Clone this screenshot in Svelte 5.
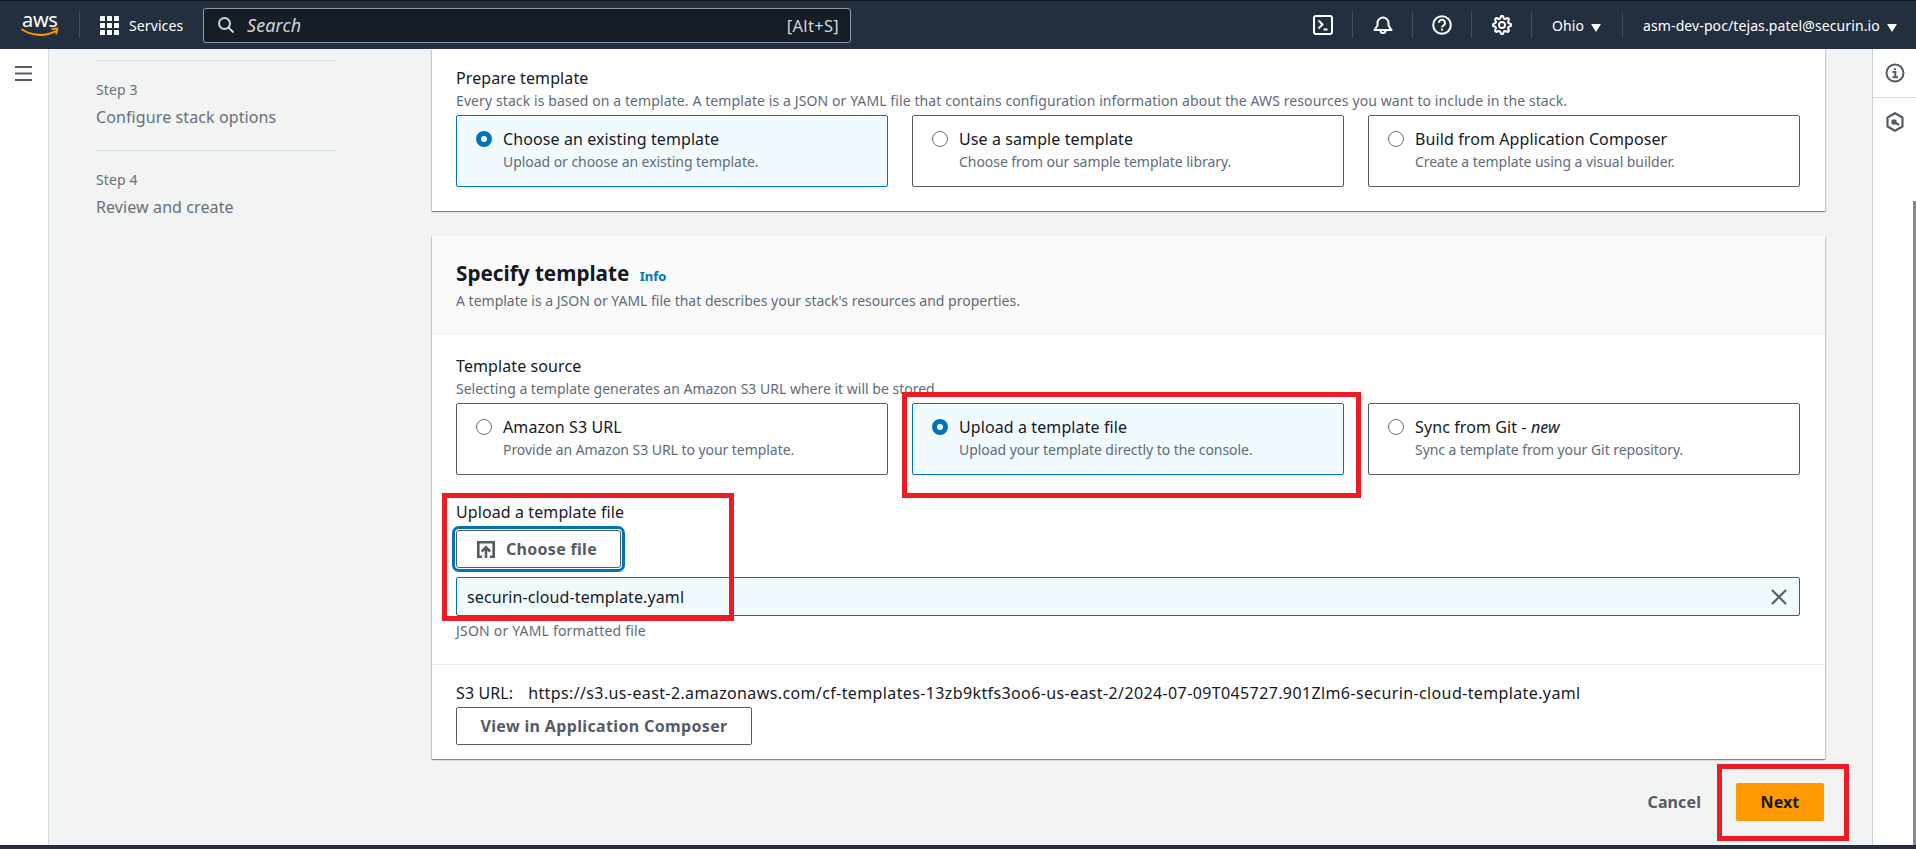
<script>
  const steps = [
    { label: 'Step 3', title: 'Configure stack options' },
    { label: 'Step 4', title: 'Review and create' }
  ];

  const prepareTiles = [
    { title: 'Choose an existing template', desc: 'Upload or choose an existing template.', on: true },
    { title: 'Use a sample template', desc: 'Choose from our sample template library.' },
    { title: 'Build from Application Composer', desc: 'Create a template using a visual builder.' }
  ];

  const sourceTiles = [
    { title: 'Amazon S3 URL', desc: 'Provide an Amazon S3 URL to your template.' },
    { title: 'Upload a template file', desc: 'Upload your template directly to the console.', on: true },
    { title: 'Sync from Git - ', tag: 'new', desc: 'Sync a template from your Git repository.' }
  ];

  // cog outline for the settings icon
  function cogPath(teeth, outer, inner) {
    let d = '';
    const n = teeth * 4;
    for (let i = 0; i < n; i++) {
      const r = i % 4 < 2 ? outer : inner;
      const a = ((i - 0.5) / n) * Math.PI * 2;
      d += (i ? 'L' : 'M') + (10 + r * Math.cos(a)).toFixed(2) + ' ' + (10 + r * Math.sin(a)).toFixed(2);
    }
    return d + 'Z';
  }
</script>

{#snippet tile(t)}
  <div class="tile" class:on={t.on}>
    <span class="radio"></span>
    <div>
      <div class="tile-title">{t.title}{#if t.tag}<em>{t.tag}</em>{/if}</div>
      <div class="desc">{t.desc}</div>
    </div>
  </div>
{/snippet}

<div class="page">
  <header class="topbar">
    <div class="logo">
      <span class="logo-text">aws</span>
      <svg width="38" height="11" viewBox="0 0 38 11">
        <path d="M1 2.500c9 6 23 7.500 33 1.800" fill="none" stroke="#f90" stroke-width="2" stroke-linecap="round" />
        <path d="M30.500 2.200l6-.700-1.500 5.800" fill="none" stroke="#f90" stroke-width="1.800" stroke-linejoin="round" />
      </svg>
    </div>
    <span class="sep logo-sep"></span>
    <svg class="grid-icon" width="19" height="19" viewBox="0 0 19 19" fill="#fff">
      {#each [0, 7, 14] as y}
        {#each [0, 7, 14] as x}
          <rect x={x} y={y} width="5" height="5" rx=".6" />
        {/each}
      {/each}
    </svg>
    <span class="services">Services</span>
    <div class="search">
      <svg width="18" height="18" viewBox="0 0 18 18" fill="none" stroke="#d1d5db" stroke-width="2">
        <circle cx="7.500" cy="7.500" r="5.500" />
        <path d="M11.500 11.500l5 5" />
      </svg>
      <span class="search-text">Search</span>
      <span class="shortcut">[Alt+S]</span>
    </div>

    <div class="tools">
      <svg class="tool" width="20" height="20" viewBox="0 0 20 20" fill="none" stroke="#fff" stroke-width="2">
        <rect x="1" y="1" width="18" height="18" rx="2" />
        <path d="M5.500 5.500l4 4-4 4M10.500 14.500h4" />
      </svg>
      <span class="sep"></span>
      <svg class="tool" width="20" height="20" viewBox="0 0 20 20" fill="none" stroke="#fff" stroke-width="2" stroke-linejoin="round">
        <path d="M1.500 15h17l-3-4.500V8a5.500 5.500 0 0 0-11 0v2.500z" />
        <path d="M7.500 15.500a2.500 2.500 0 0 0 5 0" />
      </svg>
      <span class="sep"></span>
      <svg class="tool" width="20" height="20" viewBox="0 0 20 20" fill="none" stroke="#fff" stroke-width="2">
        <circle cx="10" cy="10" r="8.800" />
        <path d="M7 7.800a3 3 0 1 1 4.600 2.500c-1 .6-1.600 1.100-1.600 2.200" />
        <path d="M10 13.800v1.800" />
      </svg>
      <span class="sep"></span>
      <svg class="tool" width="20" height="20" viewBox="0 0 20 20" fill="none" stroke="#fff" stroke-width="2" stroke-linejoin="round">
        <path d={cogPath(8, 9, 6.800)} />
        <circle cx="10" cy="10" r="3" />
      </svg>
      <span class="sep"></span>
      <span class="menu ohio">Ohio <i class="caret"></i></span>
      <span class="sep"></span>
      <span class="menu account">asm-dev-poc/tejas.patel@securin.io <i class="caret"></i></span>
    </div>
  </header>

  <div class="body">
    <nav class="rail">
      <svg width="17" height="15" viewBox="0 0 17 15" fill="#545b64">
        <rect width="17" height="2" />
        <rect y="6.500" width="17" height="2" />
        <rect y="13" width="17" height="2" />
      </svg>
    </nav>

    <aside class="steps">
      {#each steps as s}
        <div class="step">
          <div class="step-label">{s.label}</div>
          <div class="step-title">{s.title}</div>
        </div>
      {/each}
    </aside>

    <main class="content">
      <section class="card first">
        <div class="field-label">Prepare template</div>
        <div class="desc field-desc">Every stack is based on a template. A template is a JSON or YAML file that contains configuration information about the AWS resources you want to include in the stack.</div>
        <div class="tiles">
          {#each prepareTiles as t}
            {@render tile(t)}
          {/each}
        </div>
      </section>

      <section class="card second">
        <div class="card-head">
          <h2>Specify template <a href="#info" class="info">Info</a></h2>
          <div class="desc head-desc">A template is a JSON or YAML file that describes your stack's resources and properties.</div>
        </div>

        <div class="card-body">
          <div class="field-label">Template source</div>
          <div class="desc field-desc source-desc">Selecting a template generates an Amazon S3 URL where it will be stored.</div>
          <div class="tiles">
            {#each sourceTiles as t}
              {@render tile(t)}
            {/each}
          </div>

          <div class="field-label upload-label">Upload a template file</div>
          <button class="btn choose">
            <svg width="18" height="17" viewBox="0 0 18 17" fill="none" stroke="#545b64" stroke-width="2.600">
              <path d="M5 15.700H1.300V1.300h15.400v14.400H13" />
              <path d="M9 17V6.500M4.800 10.500L9 6.300l4.200 4.200" />
            </svg>
            Choose file
          </button>
          <div class="file">
            <span>securin-cloud-template.yaml</span>
            <svg width="16" height="16" viewBox="0 0 16 16" stroke="#545b64" stroke-width="2">
              <path d="M1 1l14 14M15 1L1 15" />
            </svg>
          </div>
          <div class="desc hint">JSON or YAML formatted file</div>
        </div>

        <div class="card-foot">
          <div class="s3-url">
            <span>S3 URL:</span>
            <span class="s3-link">https://s3.us-east-2.amazonaws.com/cf-templates-13zb9ktfs3oo6-us-east-2/2024-07-09T045727.901Zlm6-securin-cloud-template.yaml</span>
          </div>
          <button class="btn composer">View in Application Composer</button>
        </div>
      </section>

      <div class="actions">
        <span class="cancel">Cancel</span>
        <button class="next">Next</button>
      </div>
    </main>

    <aside class="tools-rail">
      <div class="rail-item">
        <svg width="20" height="20" viewBox="0 0 20 20" fill="none" stroke="#545b64" stroke-width="2">
          <circle cx="10" cy="10" r="8.500" />
          <path d="M7.500 9h2.800v5M7.500 14.200h5.500M10 5.200v1.800" />
        </svg>
      </div>
      <div class="rail-item">
        <svg width="18" height="20" viewBox="0 0 18 20" fill="none" stroke="#545b64" stroke-width="2.200" stroke-linejoin="round">
          <path d="M9 1.200l7.500 4.300v9L9 18.800l-7.500-4.300v-9z" />
          <circle cx="8" cy="10" r="1.600" fill="#545b64" />
          <path d="M8 10l5 3" />
        </svg>
      </div>
    </aside>
  </div>

  <div class="bottom"></div>

  <!-- annotations drawn over the screenshot -->
  <div class="mark mark-tile"></div>
  <div class="mark mark-upload"></div>
  <div class="mark mark-next"></div>
  <div class="scrollbar"></div>
</div>

<style>
  :global(body) {
    margin: 0;
    overflow: hidden;
    background: #f2f3f3;
  }

  .page {
    position: relative;
    display: flex;
    flex-direction: column;
    width: 1916px;
    height: 849px;
    overflow: hidden;
    font-family: 'Noto Sans', 'Open Sans', sans-serif;
    font-size: 16px;
    letter-spacing: 0.1px;
    color: #16191f;
  }

  .topbar {
    display: flex;
    align-items: center;
    flex: none;
    height: 48px;
    padding-left: 21px;
    background: #232f3e;
    border-top: 1px solid #0f141a;
    color: #fff;
    font-size: 14px;
    box-sizing: content-box;
  }

  .logo {
    display: flex;
    flex-direction: column;
    width: 38px;
    margin-top: 1px;
  }

  .logo-text {
    font-size: 20px;
    line-height: 14px;
    letter-spacing: -0.3px;
    padding-left: 1px;
  }

  .sep {
    display: block;
    flex: none;
    width: 1px;
    height: 26px;
    background: #414d5c;
  }

  .logo-sep {
    margin-left: 20px;
  }

  .grid-icon {
    margin-left: 20px;
  }

  .services {
    margin-left: 10px;
    width: 74px;
  }

  .search {
    display: flex;
    align-items: center;
    box-sizing: border-box;
    width: 648px;
    height: 35px;
    padding: 0 11px 0 13px;
    background: #161d26;
    border: 1px solid #8d99a8;
    border-radius: 3px;
    color: #d1d5db;
  }

  .search-text {
    margin-left: 12px;
    font-size: 18px;
    font-style: italic;
  }

  .shortcut {
    margin-left: auto;
    font-size: 16.500px;
    letter-spacing: 0.3px;
  }

  .tools {
    display: flex;
    align-items: center;
    margin-left: 462px;
  }

  .tool {
    margin: 0 19.300px;
  }

  .tool:first-child {
    margin-left: 0;
  }

  .menu {
    white-space: nowrap;
  }

  .ohio {
    width: 70px;
    padding-left: 20px;
    box-sizing: content-box;
  }

  .account {
    padding-left: 20px;
  }

  .caret {
    display: inline-block;
    width: 0;
    height: 0;
    margin-left: 3px;
    border-left: 5px solid transparent;
    border-right: 5px solid transparent;
    border-top: 8px solid #fff;
    vertical-align: -1px;
  }

  .body {
    display: flex;
    flex: 1;
    min-height: 0;
  }

  .rail {
    flex: none;
    box-sizing: border-box;
    width: 49px;
    padding: 15px 0 0 15px;
    background: #fff;
    border-right: 1px solid #d5dbdb;
  }

  .steps {
    flex: none;
    box-sizing: border-box;
    width: 383px;
    padding: 11px 0 0 47px;
  }

  .step {
    width: 240px;
    height: 90px;
    box-sizing: border-box;
    padding-top: 19px;
    border-top: 1px solid #d5dbdb;
  }

  .step-label {
    font-size: 14px;
    line-height: 20px;
    color: #687078;
  }

  .step-title {
    margin-top: 6px;
    line-height: 22px;
    color: #687078;
  }

  .content {
    flex: none;
    width: 1393px;
  }

  .card {
    background: #fff;
    box-shadow: 0 1px 1px 0 rgba(0, 28, 36, 0.3), 1px 1px 1px 0 rgba(0, 28, 36, 0.15), -1px 1px 1px 0 rgba(0, 28, 36, 0.15);
  }

  .first {
    height: 162px;
    box-sizing: border-box;
    padding: 18px 24px 0;
  }

  .second {
    margin-top: 25px;
    height: 523px;
  }

  .card-head {
    box-sizing: border-box;
    height: 98px;
    padding: 22px 24px 0;
    background: #fafafa;
    border-bottom: 1px solid #eaeded;
  }

  h2 {
    margin: 0;
    font-size: 20.700px;
    line-height: 30px;
    font-weight: 700;
    letter-spacing: 0;
  }

  .info {
    margin-left: 5px;
    font-size: 13px;
    color: #0073bb;
    text-decoration: none;
  }

  .desc {
    font-size: 14px;
    line-height: 20px;
    letter-spacing: -0.05px;
    color: #5f6b7a;
  }

  .field-label {
    line-height: 22px;
  }

  .field-desc {
    margin-top: 2px;
    height: 24px;
    line-height: 20px;
    letter-spacing: 0.1px;
  }

  .source-desc,
  .head-desc {
    letter-spacing: 0;
  }

  .tiles {
    display: grid;
    grid-template-columns: repeat(3, 432px);
    gap: 24px;
  }

  .tile {
    display: flex;
    box-sizing: border-box;
    height: 72px;
    padding: 12px 13px 0 19px;
    border: 1px solid #545b64;
    border-radius: 2px;
  }

  .tile.on {
    background: #f1faff;
    border-color: #0073bb;
  }

  .radio {
    flex: none;
    box-sizing: border-box;
    width: 16px;
    height: 16px;
    margin: 3px 11px 0 0;
    background: #fff;
    border: 1px solid #687078;
    border-radius: 50%;
  }

  .on .radio {
    border: 5px solid #0073bb;
  }

  .tile-title {
    line-height: 22px;
  }

  .tile .desc {
    margin-top: 2px;
  }

  .card-body {
    box-sizing: border-box;
    height: 331px;
    padding: 21px 24px 0;
    border-bottom: 1px solid #eaeded;
  }

  .upload-label {
    margin-top: 26px;
  }

  .btn {
    display: flex;
    align-items: center;
    box-sizing: border-box;
    padding: 0;
    background: #fff;
    border: 1px solid #545b64;
    border-radius: 2px;
    font: inherit;
    font-weight: 700;
    letter-spacing: 0.1px;
    color: #545b64;
  }

  .choose {
    gap: 11px;
    width: 165px;
    height: 38px;
    margin-top: 7px;
    padding-left: 20px;
    letter-spacing: 0.3px;
    outline: 3px solid #0073bb;
    outline-offset: 1px;
    border-radius: 3px;
  }

  .file {
    display: flex;
    align-items: center;
    justify-content: space-between;
    box-sizing: border-box;
    width: 1344px;
    height: 39px;
    margin-top: 9px;
    padding: 0 12px 0 10px;
    background: #f1faff;
    border: 1px solid #0073bb;
    border-radius: 2px;
  }

  .hint {
    margin-top: 5px;
    letter-spacing: 0.2px;
  }

  .card-foot {
    padding: 17px 24px 0;
  }

  .s3-url {
    display: flex;
    gap: 15px;
    line-height: 22px;
    white-space: nowrap;
  }

  .s3-link {
    letter-spacing: 0.38px;
  }

  .composer {
    justify-content: center;
    width: 296px;
    height: 38px;
    margin-top: 3px;
    letter-spacing: 0.35px;
  }

  .actions {
    display: flex;
    align-items: center;
    justify-content: flex-end;
    gap: 35px;
    margin: 24px 1px 0 0;
  }

  .cancel {
    font-weight: 700;
    color: #545b64;
  }

  .next {
    width: 88px;
    height: 38px;
    padding: 0;
    background: #f90;
    border: none;
    border-radius: 2px;
    font: inherit;
    font-weight: 700;
    letter-spacing: 0.1px;
    color: #16191f;
  }

  .tools-rail {
    flex: none;
    box-sizing: border-box;
    width: 45px;
    margin-left: 47px;
    background: #fff;
    border-left: 1px solid #ccd1d1;
  }

  .rail-item {
    display: flex;
    justify-content: center;
    height: 49px;
    padding-top: 14px;
    box-sizing: border-box;
    border-bottom: 1px solid #d5dbdb;
  }

  .rail-item:last-child {
    border-bottom: none;
  }

  .bottom {
    flex: none;
    height: 4px;
    background: #232f3e;
  }

  .mark {
    position: absolute;
    box-sizing: border-box;
    border: 5px solid #ed1c24;
  }

  .mark-tile {
    left: 902px;
    top: 392px;
    width: 459px;
    height: 106px;
  }

  .mark-upload {
    left: 442px;
    top: 493px;
    width: 292px;
    height: 128px;
  }

  .mark-next {
    left: 1717px;
    top: 764px;
    width: 132px;
    height: 77px;
  }

  .scrollbar {
    position: absolute;
    right: 0;
    top: 201px;
    width: 3px;
    height: 644px;
    background: #8a8a8a;
  }
</style>
